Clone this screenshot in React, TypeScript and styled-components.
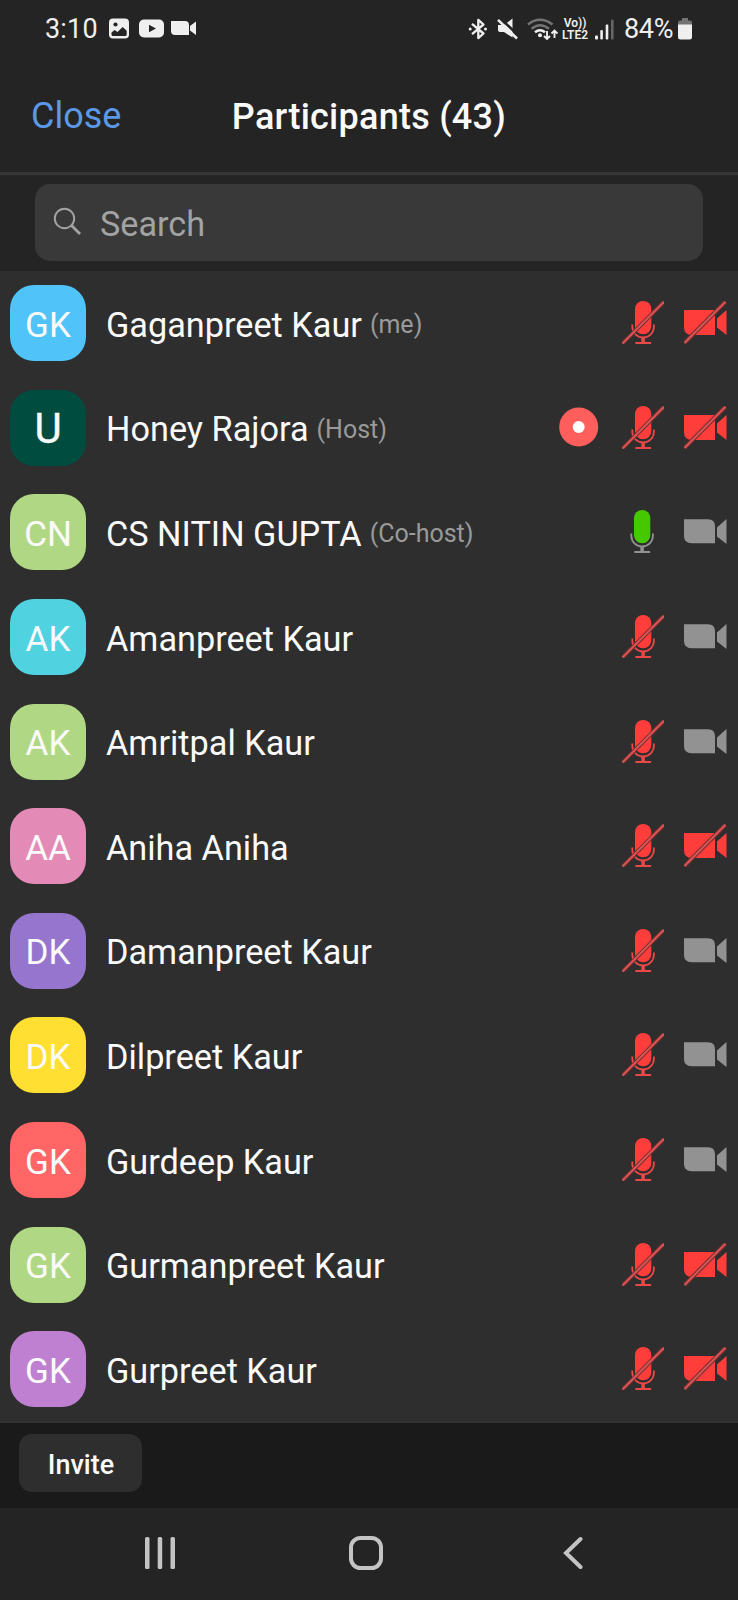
import React from 'react';
import styled, { createGlobalStyle } from 'styled-components';

const GlobalStyle = createGlobalStyle`
  *, *::before, *::after { box-sizing: border-box; }
  body { margin: 0; background: #242424; }
`;

const Screen = styled.div`
  width: 738px;
  height: 1600px;
  display: flex;
  flex-direction: column;
  overflow: hidden;
  background: #242424;
  color: #fafafa;
  font-family: Roboto, 'Liberation Sans', sans-serif;
  line-height: 1;
  white-space: nowrap;
  svg { display: block; flex: none; }
`;

const StatusBar = styled.div`
  height: 58px;
  padding: 0 46px 0 45px;
  display: flex;
  align-items: center;
  justify-content: space-between;
`;

const StatusGroup = styled.div`
  display: flex;
  align-items: center;
`;

const StatusText = styled.span<{ $width: number; $tracking?: number }>`
  width: ${(p) => p.$width}px;
  font-size: 27px;
  line-height: 32px;
  letter-spacing: ${(p) => p.$tracking ?? -0.3}px;
  color: #efefef;
`;

const Header = styled.header`
  height: 117px;
  display: grid;
  grid-template-columns: 1fr auto 1fr;
  align-items: center;
  padding: 2px 31px 0;
  border-bottom: 3px solid #363636;
`;

const CloseButton = styled.button`
  justify-self: start;
  padding: 0;
  border: 0;
  background: none;
  font: 400 36px/42px Roboto, sans-serif;
  color: #5b98e6;
`;

const Title = styled.h1`
  margin: 0;
  padding-top: 1px;
  font-size: 36px;
  font-weight: 500;
  line-height: 42px;
  letter-spacing: 0.25px;
`;

const SearchArea = styled.div`
  height: 96px;
  padding: 9px 35px 10px;
`;

const SearchField = styled.label`
  height: 77px;
  padding: 0 18px;
  display: flex;
  align-items: center;
  gap: 18px;
  border-radius: 15px;
  background: #393939;
  color: #a3a3a3;
  font-size: 34.2px;
  line-height: 40px;
  span { padding-top: 2px; }
  svg { margin-top: -2px; }
`;

const List = styled.ul`
  margin: 0;
  padding: 0;
  height: 1152px;
  list-style: none;
  background: #2e2e2e;
  border-bottom: 2px solid #323232;
`;

const Row = styled.li`
  height: 104.6px;
  padding: 0 11.5px 0 10px;
  display: flex;
  align-items: center;
`;

const Avatar = styled.div<{ $color: string; $photo?: boolean }>`
  width: 76px;
  height: 76px;
  flex: none;
  display: flex;
  align-items: center;
  justify-content: center;
  margin-right: 20px;
  border-radius: 24px;
  background: ${(p) => p.$color};
  font-size: ${(p) => (p.$photo ? 42 : 35)}px;
  padding-top: ${(p) => (p.$photo ? 2 : 4)}px;
  -webkit-text-stroke: ${(p) => (p.$photo ? '0.4px #fafafa' : '0')};
`;

const NameLine = styled.div`
  flex: 1;
  display: flex;
  align-items: center;
  gap: 8px;
  padding-top: 3px;
`;

const Name = styled.span`
  font-size: 34.25px;
  line-height: 40px;
`;

const Role = styled.span`
  font-size: 25px;
  line-height: 30px;
  padding-top: 1px;
  color: #9a9a9a;
`;

const Controls = styled.div`
  display: flex;
  align-items: center;
  gap: 20px;
  padding-bottom: 1.2px;
  > :first-child:nth-last-child(3) { margin-right: 3px; }
`;

const Footer = styled.footer`
  height: 85px;
  padding: 11px 19px;
  background: #1a1a1a;
`;

const InviteButton = styled.button`
  width: 123px;
  height: 58px;
  padding: 4px 0 0 1px;
  border: 0;
  border-radius: 13px;
  background: #2e2e2e;
  color: #fafafa;
  font: 500 27px/32px Roboto, sans-serif;
`;

const NavBar = styled.nav`
  flex: 1;
  display: flex;
  padding: 27px 0 0 144px;
`;

const NavButton = styled.button<{ $gap?: number }>`
  height: 36px;
  padding: 0;
  margin: 0 ${(p) => p.$gap ?? 0}px 0 0;
  border: 0;
  background: none;
`;

const MicIcon = ({ muted }: { muted: boolean }) => {
  const stand = muted ? '#e84848' : '#929292';
  return (
    <svg width="42" height="43" viewBox="0 0 42 43" fill="none">
      <g transform={muted ? undefined : 'translate(-1 0)'}>
        <rect x="13" y="0" width="16.3" height="33.3" rx="8.1" fill={muted ? '#ff3e3c' : '#46c800'} />
        <path d="M10.3 23.5v2.2a10.8 10.8 0 0 0 21.6 0v-2.2" stroke={stand} strokeWidth="1.8" />
        <path d="M21.1 36.5v5" stroke={stand} strokeWidth="3.5" />
        <path d="M13.3 42h15.8" stroke={stand} strokeWidth="2" />
      </g>
      {muted && (
        <>
          <path d="M.5 42.5 42 .8" stroke="#742f2f" strokeWidth="4" />
          <path d="M.5 42.5 42 .8" stroke="#d95454" strokeWidth="2" />
        </>
      )}
    </svg>
  );
};

const CameraIcon = ({ off }: { off: boolean }) => (
  <svg width="42.5" height="43" viewBox="0 0 42.5 43">
    <path
      d={off ? 'M0 9h31v25H8Q0 34 0 26Z' : 'M0 9.3h24Q31 9.3 31 16.300v17H7.500Q0 33.300 0 26Z'}
      fill={off ? '#ff3e3c' : '#929292'}
    />
    <path d="M33 17.500 42.500 9v25L33 26.500Z" fill={off ? '#ff3e3c' : '#929292'} />
    {off && (
      <>
        <path d="M.5 42 41.500 .8" stroke="#742f2f" strokeWidth="4.200" />
        <path d="M.5 42 41.500 .8" stroke="#d95454" strokeWidth="2" />
      </>
    )}
  </svg>
);

const RecordIcon = () => (
  <svg width="40" height="40" viewBox="0 0 40 40">
    <circle cx="19.700" cy="20" r="19.500" fill="#ff5f5c" />
    <circle cx="19.700" cy="20" r="6" fill="#fff" />
  </svg>
);

const NotificationIcons = () => (
  <svg width="88" height="22" viewBox="0 0 88 22" fill="#efefef">
    <rect x="0" y="0.500" width="20" height="20" rx="4" />
    <circle cx="6.500" cy="6.500" r="2.100" fill="#242424" />
    <path d="m2.500 14.500 3-2.600 3 2 5.200-5 4 3.800V16.500q0 1.500-1.500 1.500H4Q2.500 18 2.500 16.500Z" fill="#242424" />
    <rect x="30" y="1.500" width="25" height="18" rx="5" />
    <path d="m40 6.700 7 3.800-7 3.800Z" fill="#242424" />
    <path d="M62 3h14q4 0 4 4V17H66q-4 0-4-4ZM81 8 87 3.500v13.500l-6-4.500Z" />
  </svg>
);

const BluetoothIcon = () => (
  <svg width="20" height="22" viewBox="0 0 20 22" fill="none" stroke="#efefef" strokeWidth="2.300">
    <path d="m4 5.800 11.500 9.700-5.200 4.600V1.900l5.200 4.600L4 16.200" strokeLinejoin="round" />
    <circle cx="2.200" cy="11" r="1.500" fill="#efefef" stroke="none" />
    <circle cx="17.500" cy="11" r="1.500" fill="#efefef" stroke="none" />
  </svg>
);

const MuteIcon = () => (
  <svg width="22" height="22" viewBox="0 0 22 22">
    <path d="M1 7h6L15.500 .5v19L7 14H3q-2 0-2-2Z" fill="#efefef" />
    <path d="M2.500 -.5 22 18" stroke="#242424" strokeWidth="2.500" />
    <path d="M1 1.800 20 20.500" stroke="#efefef" strokeWidth="2.500" />
  </svg>
);

const WifiIcon = () => (
  <svg width="31" height="23" viewBox="0 0 31 23" fill="none">
    <path d="M1 6.500Q13 -3 25.500 6.500" stroke="#737373" strokeWidth="2.500" />
    <path d="M4.500 10.700Q13 3.700 22 10.700" stroke="#737373" strokeWidth="2.500" />
    <path d="M8 14.300q5-4.200 10 0" stroke="#efefef" strokeWidth="2.500" />
    <circle cx="13" cy="17.200" r="2" fill="#efefef" />
    <path d="M20 13v8m-3-3 3 3 3-3M27.500 20v-7.500m-3 3 3-3 3 3" stroke="#efefef" strokeWidth="1.900" />
  </svg>
);

const LteBadge = styled.div`
  width: 28px;
  display: flex;
  flex-direction: column;
  align-items: center;
  font-size: 12px;
  font-weight: 600;
  line-height: 12px;
  color: #efefef;
`;

const SignalIcon = () => (
  <svg width="19" height="21" viewBox="0 0 19 21" fill="#efefef">
    <rect x="0" y="16.500" width="3" height="4" rx="1" />
    <rect x="5.300" y="11" width="2.600" height="9.500" rx="1" />
    <rect x="10.700" y="5.500" width="2.600" height="15" rx="1" />
    <rect x="16" y="0.500" width="2.600" height="20" rx="1" fill="#666" />
  </svg>
);

const BatteryIcon = () => (
  <svg width="14" height="22" viewBox="0 0 14 22">
    <path d="M4 0h6v2.500h2q2 0 2 2V8H0V4.500q0-2 2-2h2Z" fill="#737373" />
    <path d="M0 6.500h14v12.500q0 2.500-2.500 2.500h-9Q0 21.500 0 19Z" fill="#efefef" />
  </svg>
);

const Spacer = styled.span<{ $w: number }>`
  width: ${(p) => p.$w}px;
`;

interface Participant {
  name: string;
  initials: string;
  color: string;
  role?: string;
  photo?: boolean;
  recording?: boolean;
  speaking?: boolean;
  camera?: boolean;
}

const participants: Participant[] = [
  { name: 'Gaganpreet Kaur', initials: 'GK', color: '#50c3f9', role: '(me)' },
  { name: 'Honey Rajora', initials: 'U', color: '#004d3f', role: '(Host)', photo: true, recording: true },
  { name: 'CS NITIN GUPTA', initials: 'CN', color: '#b0d884', role: '(Co-host)', speaking: true, camera: true },
  { name: 'Amanpreet Kaur', initials: 'AK', color: '#50d2e1', camera: true },
  { name: 'Amritpal Kaur', initials: 'AK', color: '#b0d884', camera: true },
  { name: 'Aniha Aniha', initials: 'AA', color: '#e48ab6' },
  { name: 'Damanpreet Kaur', initials: 'DK', color: '#9575cd', camera: true },
  { name: 'Dilpreet Kaur', initials: 'DK', color: '#ffdf32', camera: true },
  { name: 'Gurdeep Kaur', initials: 'GK', color: '#ff6665', camera: true },
  { name: 'Gurmanpreet Kaur', initials: 'GK', color: '#b0d884' },
  { name: 'Gurpreet Kaur', initials: 'GK', color: '#c080d2' },
];

export default function App() {
  return (
    <>
      <GlobalStyle />
      <Screen>
        <StatusBar>
          <StatusGroup>
            <StatusText $width={64} $tracking={0.2}>3:10</StatusText>
            <NotificationIcons />
          </StatusGroup>
          <StatusGroup>
            <BluetoothIcon />
            <Spacer $w={9} />
            <MuteIcon />
            <Spacer $w={8} />
            <WifiIcon />
            <Spacer $w={3} />
            <LteBadge>
              <span>Vo))</span>
              <span>LTE2</span>
            </LteBadge>
            <Spacer $w={6} />
            <SignalIcon />
            <Spacer $w={10} />
            <StatusText $width={54}>84%</StatusText>
            <BatteryIcon />
          </StatusGroup>
        </StatusBar>
        <Header>
          <CloseButton>Close</CloseButton>
          <Title>Participants (43)</Title>
        </Header>
        <SearchArea>
          <SearchField>
            <svg width="29" height="30" viewBox="0 0 29 30" fill="none" stroke="#a3a3a3" strokeWidth="2">
              <circle cx="11.500" cy="11.500" r="9.700" />
              <path d="m18.500 18.500 8.500 8.500" strokeWidth="2.800" />
            </svg>
            <span>Search</span>
          </SearchField>
        </SearchArea>
        <List>
          {participants.map((p) => (
            <Row key={p.name}>
              <Avatar $color={p.color} $photo={p.photo}>{p.initials}</Avatar>
              <NameLine>
                <Name>{p.name}</Name>
                {p.role && <Role>{p.role}</Role>}
              </NameLine>
              <Controls>
                {p.recording && <RecordIcon />}
                <MicIcon muted={!p.speaking} />
                <CameraIcon off={!p.camera} />
              </Controls>
            </Row>
          ))}
        </List>
        <Footer>
          <InviteButton>Invite</InviteButton>
        </Footer>
        <NavBar>
          <NavButton $gap={172} aria-label="Recent apps">
            <svg width="32" height="36" viewBox="0 0 32 36" fill="#c4c4c4">
              <rect x="1" y="2" width="4.500" height="32" rx="1.500" />
              <rect x="13.700" y="2" width="4.500" height="32" rx="1.500" />
              <rect x="26.500" y="2" width="4.500" height="32" rx="1.500" />
            </svg>
          </NavButton>
          <NavButton $gap={179} aria-label="Home">
            <svg width="36" height="36" viewBox="0 0 36 36" fill="none">
              <rect x="3" y="3" width="30" height="30" rx="9.500" stroke="#c4c4c4" strokeWidth="4" />
            </svg>
          </NavButton>
          <NavButton aria-label="Back">
            <svg width="20" height="36" viewBox="0 0 20 36" fill="none">
              <path d="M17.500 4 3 18l14.500 14" stroke="#c4c4c4" strokeWidth="4" strokeLinecap="round" />
            </svg>
          </NavButton>
        </NavBar>
      </Screen>
    </>
  );
}
